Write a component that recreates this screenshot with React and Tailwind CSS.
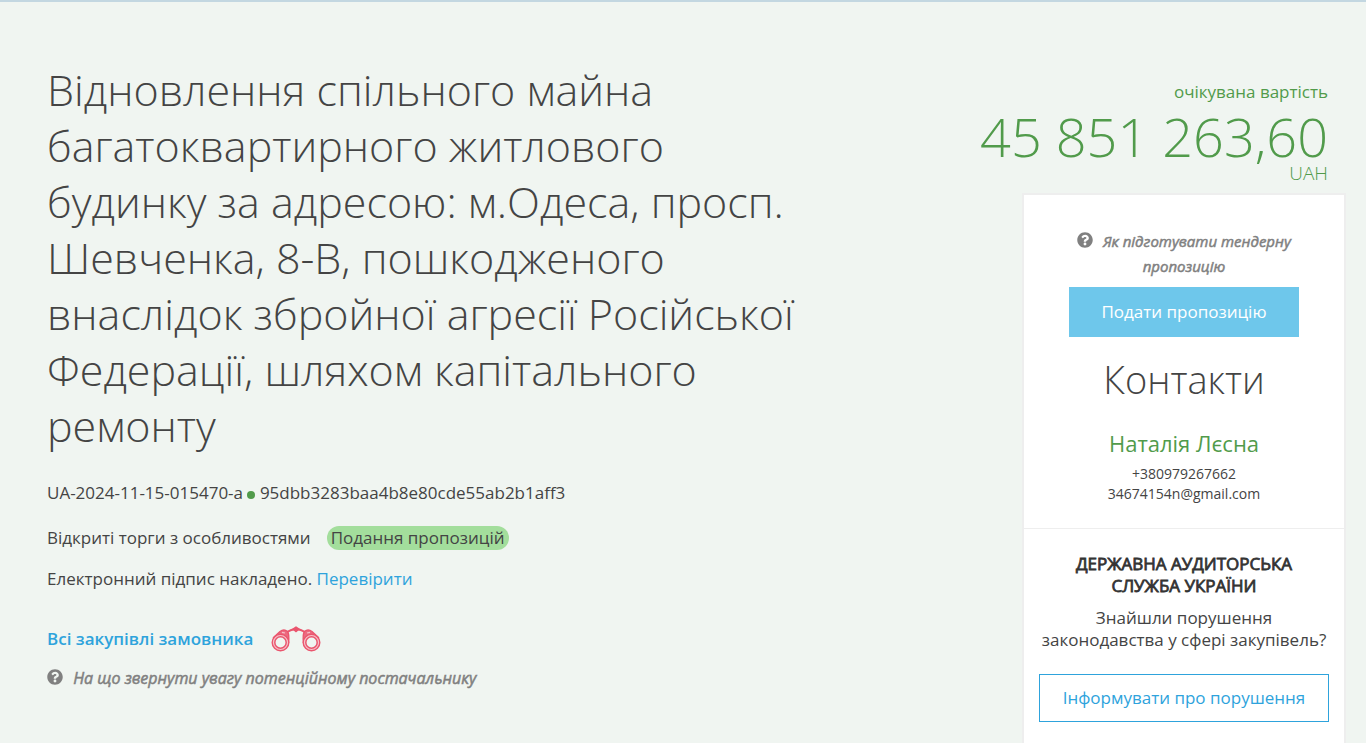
import React from 'react';
import { FaQuestionCircle } from 'react-icons/fa';

const tender = {
  title:
    'Відновлення спільного майна багатоквартирного житлового будинку за адресою: м.Одеса, просп. Шевченка, 8-В, пошкодженого внаслідок збройної агресії Російської Федерації, шляхом капітального ремонту',
  number: 'UA-2024-11-15-015470-a',
  hash: '95dbb3283baa4b8e80cde55ab2b1aff3',
  procedure: 'Відкриті торги з особливостями',
  status: 'Подання пропозицій',
  amount: '45 851 263,60',
  currency: 'UAH',
  contact: {
    name: 'Наталія Лєсна',
    phone: '+380979267662',
    email: '34674154n@gmail.com'
  }
};

function Binoculars() {
  return (
    <svg className="w-[50px] h-[26px]" viewBox="0 0 50 26" fill="none" stroke="#ea566e" aria-hidden="true">
      <path d="M16 6 Q20 3.5 25 3 Q30 3.5 34 6" strokeWidth="2" />
      <path d="M22 3 L25 1 L28 3 L25 5.5 Z" fill="#ea566e" strokeWidth="1.4" />
      {/* Left barrel */}
      <path d="M2 12 L9 5.5 Q13 2.5 16.5 5.5 Q18.5 8 17.5 17" fill="#ec6a80" strokeWidth="1.4" />
      <circle cx="9.5" cy="16.5" r="8.3" fill="#f6c3ca" strokeWidth="1.4" />
      <circle cx="9.5" cy="16.5" r="5.7" fill="#f0f5f1" strokeWidth="1.5" />
      <path d="M11 6.3 L14 7" stroke="#f6c3ca" strokeWidth="1.2" />
      {/* Right barrel */}
      <path d="M48 12 L41 5.5 Q37 2.5 33.5 5.5 Q31.5 8 32.5 17" fill="#ec6a80" strokeWidth="1.4" />
      <circle cx="40.5" cy="16.5" r="8.3" fill="#f6c3ca" strokeWidth="1.4" />
      <circle cx="40.5" cy="16.5" r="5.7" fill="#f0f5f1" strokeWidth="1.5" />
      <path d="M36 7 L39 6.3" stroke="#f6c3ca" strokeWidth="1.2" />
    </svg>
  );
}

function HelpLink({ children }) {
  return (
    <a href="#help" className="italic text-[#808080] [-webkit-text-stroke:0.5px]">
      <FaQuestionCircle className="inline w-4 h-4 mr-1.5 align-[-1px]" stroke="none" /> {children}
    </a>
  );
}

function TenderInfo() {
  return (
    <section className="flex-1 pt-[60px]">
      <h1 className="max-w-[760px] text-[43px] leading-[56px] font-light text-[#444]">{tender.title}</h1>

      <p className="mt-[27px] leading-6">
        {tender.number} <span className="inline-block w-2 h-2 rounded-full bg-[#519b4b]" /> {tender.hash}
      </p>
      <p className="mt-[21px] flex items-center gap-4 leading-6">
        {tender.procedure}
        <span className="rounded-full bg-[#a3de9c] px-1">{tender.status}</span>
      </p>
      <p className="mt-[17px] leading-6">
        Електронний підпис накладено. <a href="#sign" className="text-[#2ea3dc]">Перевірити</a>
      </p>

      <div className="mt-[35px] flex items-center gap-[18px]">
        <a href="#all" className="leading-6 font-semibold text-[#2ea3dc]">Всі закупівлі замовника</a>
        <Binoculars />
      </div>
      <p className="mt-[14px] text-[16px] leading-[25px]">
        <HelpLink>На що звернути увагу потенційному постачальнику</HelpLink>
      </p>
    </section>
  );
}

function Sidebar() {
  const { name, phone, email } = tender.contact;

  return (
    <aside className="flex flex-col items-end pt-[78px]">
      <div className="pr-[18px] text-right text-[#519b4b]">
        <p className="leading-6">очікувана вартість</p>
        <p className="mt-1 text-[54px] leading-[56px] font-light">{tender.amount}</p>
        <p className="text-[19px] leading-[18px] font-light">{tender.currency}</p>
      </div>

      <div className="mt-[11px] w-[324px] flex-1 border-2 border-b-0 border-[#eee] bg-white text-center">
        {/* Contacts */}
        <div className="border-b border-[#eee] px-[45px] pt-[34px] pb-6">
          <p className="text-[15px] leading-[25px]">
            <HelpLink>Як підготувати тендерну пропозицію</HelpLink>
          </p>
          <button type="button" className="mt-2 h-[50px] w-full bg-[#6ec7eb] text-white">
            Подати пропозицію
          </button>
          <h2 className="mt-[18px] text-[38px] leading-[48px] font-light">Контакти</h2>
          <h3 className="mt-[25px] text-[22px] leading-[30px] text-[#519b4b]">{name}</h3>
          <p className="mt-[6px] text-[14px] leading-5">{phone}</p>
          <p className="text-[14px] leading-5">{email}</p>
        </div>

        {/* Audit service */}
        <div className="px-[15px] pt-6">
          <h4 className="px-8 leading-[22px] text-[#333] [-webkit-text-stroke:0.8px]">
            ДЕРЖАВНА АУДИТОРСЬКА СЛУЖБА УКРАЇНИ
          </h4>
          <p className="mt-[10px] leading-[22px]">Знайшли порушення законодавства у сфері закупівель?</p>
          <button type="button" className="mt-[23px] h-12 w-full border border-[#2ea3dc] text-[#2ea3dc]">
            Інформувати про порушення
          </button>
        </div>
      </div>
    </aside>
  );
}

export default function App() {
  return (
    <div className="flex min-h-screen border-t-2 border-[#c3d7e1] bg-[#f0f5f1] pr-5 pl-[47px] font-['Open_Sans',sans-serif] text-[17px] text-[#444]">
      <TenderInfo />
      <Sidebar />
    </div>
  );
}
